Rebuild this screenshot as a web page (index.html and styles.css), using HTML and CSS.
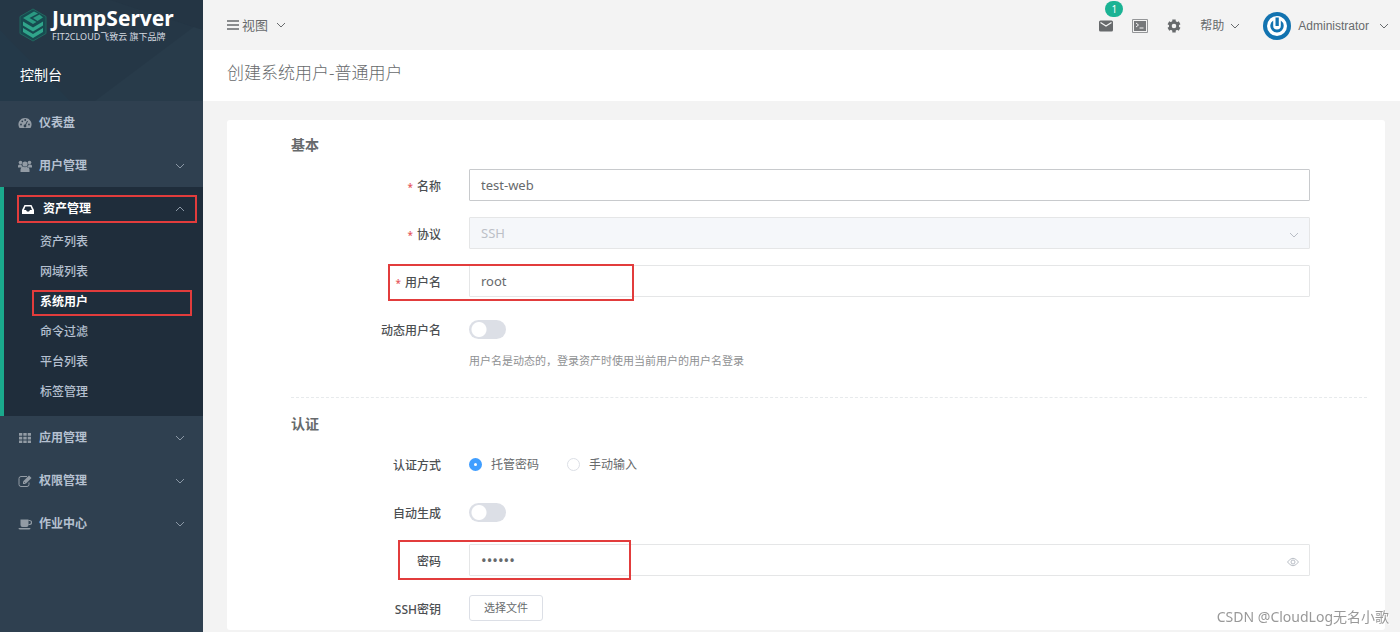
FILE: index.html
```html
<!DOCTYPE html>
<html lang="zh-CN">
<head>
<meta charset="utf-8">
<title>创建系统用户-普通用户</title>
<link rel="stylesheet" href="styles.css">
</head>
<body>
<svg class="defs" aria-hidden="true">
  <symbol id="chevron" viewBox="0 0 10 6"><path d="M1 1l4 4 4-4" fill="none" stroke="currentColor"/></symbol>
</svg>
<div class="app">
  <aside class="sidebar">
    <div class="brand">
      <svg class="backdrop" viewBox="0 0 203 101" preserveAspectRatio="none" aria-hidden="true">
        <path d="M0 0h203v101H0z" fill="#253746"/>
        <path d="M95 101L203 20v81z" fill="#283b4a"/>
        <path d="M0 30l70 71H0z" fill="#243949"/>
        <path d="M110 0h93v30z" fill="#243544"/>
      </svg>
      <a class="logo" href="#">
        <svg class="logo-mark" viewBox="0 0 28 34" aria-hidden="true">
          <path d="M14 1L27 8.500v17L14 33 1 25.500v-17z" fill="#174b50" stroke="#21675f" stroke-width="1"/>
          <path d="M15 3.500L4 10l10 6 3.500-2-7-4L19 5.500z" fill="#2a9a82"/>
          <path d="M20.500 6.500L14 10l4.500 3L24 9.500z" fill="#2a9a82"/>
          <path d="M4 13.500l10 6 10-6v4l-10 6-10-6zM4 20l10 6 10-6v4l-10 6-10-6z" fill="#30a58b"/>
        </svg>
        <span class="logo-text">
          <span class="logo-name">JumpServer</span>
          <span class="logo-sub">FIT2CLOUD飞致云 旗下品牌</span>
        </span>
      </a>
      <div class="console">控制台</div>
    </div>
    <nav class="menu">
      <a class="item" href="#">
        <svg class="icon" viewBox="0 0 14 14"><path d="M7 2a6.500 6.500 0 0 0-5.500 10h11A6.500 6.500 0 0 0 7 2z" fill="currentColor"/><g fill="#2f4050"><circle cx="3" cy="8.500" r=".9"/><circle cx="4.300" cy="5.300" r=".9"/><circle cx="7.200" cy="4" r=".9"/><circle cx="11" cy="8.500" r=".9"/></g><path d="M7 10l2.500-5" stroke="#2f4050"/><circle cx="7" cy="10" r="1.400" fill="#2f4050"/></svg>
        <span>仪表盘</span>
      </a>
      <a class="item" href="#">
        <svg class="icon" viewBox="0 0 14 14" fill="currentColor"><circle cx="2.500" cy="3.500" r="1.800"/><circle cx="11.500" cy="3.500" r="1.800"/><circle cx="7" cy="5" r="2.600"/><path d="M0 8.500V7q0-1.500 1.500-1.500h2Q3.500 7.500 5 8.500zM14 8.500V7q0-1.500-1.500-1.500h-2Q10.500 7.500 9 8.500zM2.500 13q-.5-5 2.500-5.500 2 1.500 4 0 3 .5 2.500 5.500z"/></svg>
        <span>用户管理</span>
        <svg class="arrow"><use href="#chevron"/></svg>
      </a>
      <div class="group">
        <a class="item group-head" href="#">
          <svg class="icon small" viewBox="0 0 12 12"><path d="M2.500 2h7L12 7v4H0V7z" fill="currentColor"/><path d="M3.400 3.500h5.200L10 7H8l-1 1.500H5L4 7H2z" fill="#1f2d3b"/></svg>
          <span>资产管理</span>
          <svg class="arrow up"><use href="#chevron"/></svg>
          <i class="mark mark-head"></i>
        </a>
        <ul class="submenu">
          <li><a href="#">资产列表</a></li>
          <li><a href="#">网域列表</a></li>
          <li><a class="current" href="#">系统用户<i class="mark mark-sub"></i></a></li>
          <li><a href="#">命令过滤</a></li>
          <li><a href="#">平台列表</a></li>
          <li><a href="#">标签管理</a></li>
        </ul>
      </div>
      <a class="item" href="#">
        <svg class="icon" viewBox="0 0 14 14" fill="currentColor"><path d="M1 2h3.300v2.700H1zM5.300 2h3.400v2.700H5.300zM9.700 2H13v2.700H9.700zM1 5.700h3.300v2.700H1zM5.300 5.700h3.400v2.700H5.300zM9.700 5.700H13v2.700H9.700zM1 9.400h3.300v2.700H1zM5.300 9.400h3.400v2.700H5.300zM9.700 9.400H13v2.700H9.700z"/></svg>
        <span>应用管理</span>
        <svg class="arrow"><use href="#chevron"/></svg>
      </a>
      <a class="item" href="#">
        <svg class="icon" viewBox="0 0 14 14"><path d="M9 2.500H3A2 2 0 0 0 1 4.500v6a2 2 0 0 0 2 2h6a2 2 0 0 0 2-2V8.500" fill="none" stroke="currentColor"/><path d="M5 10V7.500L11 1.500 13.500 4 7.500 10z" fill="currentColor"/><path d="M6 8l1.500 1.500" stroke="#2f4050" stroke-width=".6"/></svg>
        <span>权限管理</span>
        <svg class="arrow"><use href="#chevron"/></svg>
      </a>
      <a class="item" href="#">
        <svg class="icon" viewBox="0 0 14 14"><path d="M2.500 2.500h8V8a2 2 0 0 1-2 2h-4a2 2 0 0 1-2-2zM.5 11h12q0 1.500-1.500 1.500H2Q.5 12.500.5 11z" fill="currentColor"/><path d="M10.500 3.500h1a1.800 1.800 0 0 1 0 4h-1" fill="none" stroke="currentColor" stroke-width="1.200"/></svg>
        <span>作业中心</span>
        <svg class="arrow"><use href="#chevron"/></svg>
      </a>
    </nav>
  </aside>

  <div class="main">
    <header class="topbar">
      <button class="view" type="button">
        <svg class="bars" viewBox="0 0 12 12"><path d="M0 2h12M0 6h12M0 10h12" stroke="currentColor" stroke-width="1.500"/></svg>
        <span>视图</span>
        <svg class="arrow"><use href="#chevron"/></svg>
      </button>
      <div class="tools">
        <button class="tool" type="button" aria-label="消息">
          <svg class="mail" viewBox="0 0 14 12"><rect y=".5" width="14" height="11" rx="1.500" fill="currentColor"/><path d="M1.500 2.500L7 6l5.500-3.500" fill="none" stroke="#f3f3f3" stroke-width="1.300"/></svg>
          <span class="badge">1</span>
        </button>
        <button class="tool" type="button" aria-label="终端">
          <svg class="terminal" viewBox="0 0 16 14"><path d="M.5.500h15v13H.5z" fill="none" stroke="#949698"/><path d="M2 2h12v10H2z" fill="#76787a"/><path d="M4 4l2.500 2L4 8M7.500 9h4" fill="none" stroke="#f3f3f3"/></svg>
        </button>
        <button class="tool" type="button" aria-label="设置">
          <svg class="gear" viewBox="0 0 14 14"><circle cx="7" cy="7" r="3.700" fill="none" stroke="currentColor" stroke-width="2.800"/><path d="M7 .5v3M7 10.500v3M1.400 3.750l2.600 1.500M10 8.750l2.600 1.500M1.400 10.250L4 8.750M10 5.250l2.600-1.500" stroke="currentColor" stroke-width="3.400"/></svg>
        </button>
        <button class="tool help" type="button"><span>帮助</span><svg class="arrow"><use href="#chevron"/></svg></button>
        <button class="tool account" type="button">
          <svg class="avatar" viewBox="0 0 28 28"><circle cx="14" cy="14" r="14" fill="#1273b0"/><circle cx="14" cy="14" r="10" fill="#fff"/><path d="M10.200 8.400a6.700 6.700 0 1 0 7.600 0v5.300a3.800 3.800 0 0 1-7.600 0z" fill="#1273b0"/><path d="M11.200 8v6a2.800 2.800 0 0 0 5.600 0V4.500h-3.600V13" fill="#fff"/><path d="M12.500 5.500h3.300V14h-3.300z" fill="#1273b0"/></svg>
          <span>Administrator</span>
          <svg class="arrow"><use href="#chevron"/></svg>
        </button>
      </div>
    </header>
    <h1 class="page-title">创建系统用户-普通用户</h1>

    <form class="card">
      <h2>基本</h2>
      <div class="row">
        <label class="name required" for="f-name">名称</label>
        <div class="field"><input class="text strong" id="f-name" type="text" value="test-web"></div>
      </div>
      <div class="row">
        <label class="name required" for="f-proto">协议</label>
        <div class="field">
          <select class="text" id="f-proto" disabled><option>SSH</option></select>
          <svg class="arrow suffix"><use href="#chevron"/></svg>
        </div>
      </div>
      <div class="row">
        <label class="name required" for="f-user">用户名</label>
        <div class="field"><input class="text" id="f-user" type="text" value="root"></div>
        <i class="mark mark-user"></i>
      </div>
      <div class="row">
        <label class="name" for="f-dyn">动态用户名</label>
        <div class="field"><input class="switch" id="f-dyn" type="checkbox"></div>
      </div>
      <p class="hint">用户名是动态的，登录资产时使用当前用户的用户名登录</p>
      <hr>
      <h2>认证</h2>
      <div class="row" role="radiogroup" aria-labelledby="auth-name">
        <span class="name" id="auth-name">认证方式</span>
        <div class="field radios">
          <label><input type="radio" name="auth" checked><span>托管密码</span></label>
          <label><input type="radio" name="auth"><span>手动输入</span></label>
        </div>
      </div>
      <div class="row">
        <label class="name" for="f-auto">自动生成</label>
        <div class="field"><input class="switch" id="f-auto" type="checkbox"></div>
      </div>
      <div class="row">
        <label class="name" for="f-pass">密码</label>
        <div class="field">
          <input class="text" id="f-pass" type="password" value="secret">
          <svg class="eye suffix" viewBox="0 0 12 10"><path d="M.5 5Q6-2.500 11.500 5 6 12.500.5 5z" fill="none" stroke="currentColor"/><circle cx="6" cy="5" r="2" fill="none" stroke="currentColor"/></svg>
        </div>
        <i class="mark mark-pass"></i>
      </div>
      <div class="row">
        <label class="name" for="f-key">SSH密钥</label>
        <div class="field"><button class="file" id="f-key" type="button">选择文件</button></div>
      </div>
    </form>
  </div>
</div>
<div class="watermark">CSDN @CloudLog无名小歌</div>
</body>
</html>
```
FILE: styles.css
```css
* { box-sizing: border-box; }
body {
  margin: 0;
  font: 12px/20px "Noto Sans", "Noto Sans CJK SC", sans-serif;
  color: #676a6c;
  background: #f3f3f3;
}
a { color: inherit; text-decoration: none; }
button, input, select { font: inherit; color: inherit; }
button { border: 0; padding: 0; background: none; }
.defs { display: none; }
.app { display: flex; min-height: 100vh; }
.arrow { width: 10px; height: 6px; flex: none; }
.up { transform: rotate(180deg); }

.mark {
  position: absolute;
  border: 2px solid #e23c3c;
  pointer-events: none;
}

/* Sidebar */
.sidebar { width: 203px; flex: none; background: #2f4050; color: #b5c0d0; }
.brand { position: relative; height: 101px; color: #fff; }
.backdrop { position: absolute; inset: 0; width: 100%; height: 100%; }
.logo { position: relative; display: flex; gap: 5px; padding: 8px 0 0 19px; }
.logo-mark { width: 28px; height: 34px; }
.logo-text { display: flex; flex-direction: column; }
.logo-name { font-size: 21px; font-weight: 700; line-height: 21px; }
.logo-sub {
  font-size: 9px;
  line-height: 15px;
  color: #d5dae0;
  white-space: nowrap;
}
.console { position: relative; padding: 21px 0 0 20px; font-size: 14px; }

.item {
  position: relative;
  display: flex;
  align-items: center;
  height: 43px;
  padding: 0 18px;
  font-weight: 700;
}
.icon { width: 14px; height: 14px; margin-right: 7px; color: #929ba4; }
.icon.small { width: 12px; height: 12px; margin-right: 9px; color: #fff; }
.item .arrow { margin-left: auto; color: #8b98a6; }
.group { background: #1f2d3b; border-left: 4px solid #1aa98c; padding-bottom: 9px; }
.group-head { height: 39px; padding-top: 4px; color: #fff; }
.mark-head { inset: 8px 6px 3px 13px; }
.submenu { margin: 0; padding: 1px 0 0; list-style: none; font-weight: 500; }
.submenu a { position: relative; display: block; padding: 5px 0 5px 36px; }
.submenu .current { color: #fff; font-weight: 700; }
.mark-sub { inset: 3px 11px 1px 28px; }

/* Header */
.main { flex: 1; min-width: 0; }
.topbar { display: flex; justify-content: space-between; align-items: center; height: 50px; padding: 0 11px 0 24px; }
.view { display: flex; align-items: center; gap: 3px; font-size: 13px; }
.view .arrow { margin-left: 5px; }
.bars { width: 12px; height: 12px; }
.tools { display: flex; align-items: center; gap: 19px; padding-top: 2px; }
.tool { position: relative; display: flex; align-items: center; }
.mail { width: 14px; height: 12px; }
.terminal { width: 16px; height: 14px; }
.gear { width: 14px; height: 14px; }
.help { gap: 6px; }
.account { gap: 7px; margin-left: 4px; font-family: "Liberation Sans", sans-serif; }
.account .arrow { margin-left: 3px; }
.avatar { width: 28px; height: 28px; }
.badge {
  position: absolute;
  left: 6px;
  bottom: 9px;
  width: 18px;
  border-radius: 8px;
  background: #1ab394;
  color: #fff;
  font-size: 10px;
  line-height: 16px;
}
.tool .badge { bottom: 15px; }
.page-title {
  margin: 0;
  padding: 11px 24px 16px;
  background: #fff;
  font-size: 17px;
  line-height: 24px;
  font-weight: 300;
}

/* Form */
.card {
  margin: 19px 15px 3px 24px;
  padding: 15px 18px 6px 64px;
  background: #fff;
  border-radius: 3px;
}
.card h2 { margin: 0 0 14px; font-size: 14px; line-height: 20px; font-weight: 700; }
.row { position: relative; display: flex; align-items: center; gap: 28px; height: 32px; margin-bottom: 16px; padding-right: 57px; }
.row:last-child { margin-bottom: 0; }
.name { width: 150px; flex: none; padding-top: 3px; text-align: right; font-weight: 500; color: #4c4f52; }
.required::before { content: "*"; margin-right: 4px; font-size: 10px; color: #e5565b; }
.field { position: relative; flex: 1; display: flex; align-items: center; }
.text {
  width: 100%;
  height: 32px;
  padding: 0 11px;
  border: 1px solid #e5e6e7;
  border-radius: 1px;
  background: #fff;
  font-size: 13px;
  outline: 0;
  appearance: none;
}
.text[type="password"] { font-size: 15px; }
.text.strong { border-color: #c8cacd; }
select.text:disabled { background: #f5f7fa; color: #bcc0c7; opacity: 1; }
.suffix { position: absolute; right: 11px; color: #b8bdc5; }
.arrow.suffix { top: 15px; }
.eye { top: 13px; width: 12px; height: 10px; }
.switch {
  appearance: none;
  width: 37px;
  height: 19px;
  margin: 0;
  border-radius: 10px;
  background: radial-gradient(circle at 10px 50%, #fff 7px, transparent 8px) #dcdfe6;
}
.hint { margin: -10px 0 26px; padding-left: 178px; font-size: 11px; line-height: 20px; color: #8f9193; }
.card hr { height: 0; margin: 0 0 16px; border: 0; border-top: 1px dashed #e7eaec; }
.radios { gap: 28px; }
.radios label { display: flex; align-items: center; gap: 9px; }
.radios span { padding-top: 2px; }
.radios input {
  appearance: none;
  width: 13px;
  height: 13px;
  margin: 0;
  border: 1px solid #dcdfe6;
  border-radius: 50%;
  background: #fff;
}
.radios input:checked { border: 5px solid #409eff; }
.file { height: 26px; padding: 0 14px; border: 1px solid #dcdfe6; border-radius: 3px; background: #fff; font-size: 11px; }
.mark-user { left: 97px; top: -1px; width: 246px; height: 37px; }
.mark-pass { left: 107px; top: -4px; width: 233px; height: 40px; }

.watermark {
  position: fixed;
  right: 11px;
  bottom: 5px;
  font-size: 14px;
  color: #999;
  text-shadow: 1px 1px 0 #fff;
}
```
